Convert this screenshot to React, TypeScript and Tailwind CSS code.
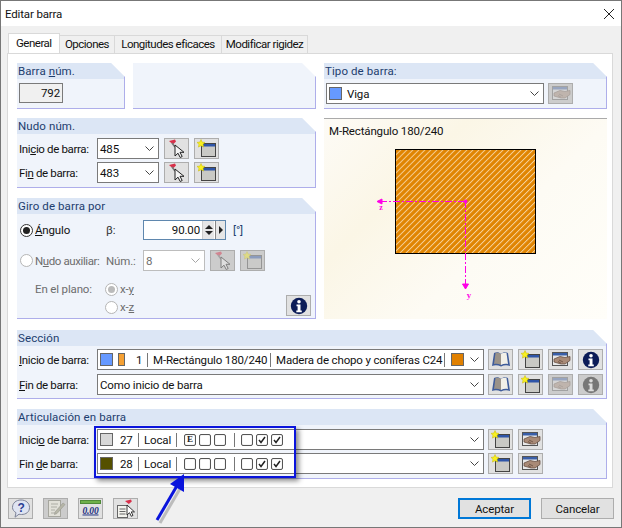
import type { ReactNode } from 'react';

const NewWinIcon = ({ off = false }: { off?: boolean }) => (
  <svg width="21" height="19" viewBox="0 0 21 19" className={off ? 'opacity-40' : ''}>
    <rect x="5.500" y="4.500" width="14" height="13" fill="#c9c9c5" stroke="#444" />
    <rect x="6" y="5" width="13" height="2.500" fill="#2f55a8" />
    <path d="M5 0.500l1.200 2.600 2.800 .3-2 1.900 .6 2.800-2.600-1.400-2.600 1.400 .6-2.800-2-1.900 2.800-.3z" fill="#f8f020" stroke="#c8b800" strokeWidth="0.5" />
  </svg>
);

const PinIcon = ({ off = false }: { off?: boolean }) => (
  <svg width="20" height="19" viewBox="0 0 20 19" className={off ? 'opacity-45' : ''}>
    <path d="M2 2l6-1.500 1 2-3 3z" fill="#d8304a" />
    <path d="M5 4l3 4" stroke="#777" strokeWidth="1.600" />
    <path d="M8 6v11l3-2.800 2.200 4.300 2-1-2.200-4.200h4z" fill="#f4f4f4" stroke="#222" strokeWidth="1" />
  </svg>
);

const HandIcon = ({ off = false }: { off?: boolean }) => (
  <svg width="20" height="17" viewBox="0 0 20 17" className={off ? 'opacity-35' : ''}>
    <rect x="1.500" y="1.500" width="15" height="13" fill="#e8e8e8" stroke="#555" />
    <rect x="2" y="2" width="14" height="2.500" fill="#3a5fa8" />
    <path d="M3 8l6-2.500 5 1 5-1v4l-5 3.500h-4l-7-2z" fill="#a98a76" stroke="#5b4436" strokeWidth="0.7" />
    <path d="M8 9l4 2M7 10.500l3 1.700" stroke="#5b4436" strokeWidth="0.7" />
  </svg>
);

const BookIcon = () => (
  <svg width="20" height="17" viewBox="0 0 20 17">
    <path d="M1 15l2-13c2.500-1 5-1 7 1 2-2 4.500-2 7-1l2 13c-3-1.200-6-1-9 .5-3-1.500-6-1.700-9-.5z" fill="#3f5c9a" />
    <path d="M3 13l1.500-11c2-.5 4-.2 5.500 1v11c-2-1.200-4.500-1.500-7-1z" fill="#9a9288" />
    <path d="M17 13l-1.500-11c-2-.5-4-.2-5.500 1v11c2-1.200 4.500-1.500 7-1z" fill="#f2f0e8" />
  </svg>
);

const InfoIcon = ({ off = false }: { off?: boolean }) => (
  <svg width="18" height="18" viewBox="0 0 18 18">
    <circle cx="9" cy="9" r="8.200" fill={off ? '#777' : '#0c1c58'} />
    <circle cx="9" cy="4.700" r="1.800" fill={off ? '#ddd' : '#fff'} />
    <path d="M6.500 7.500h4v6h1.300v1.800h-5.500v-1.800h1.300v-4.200h-1.100z" fill={off ? '#ddd' : '#fff'} />
  </svg>
);

const HelpIcon = () => (
  <svg width="20" height="19" viewBox="0 0 20 19">
    <path d="M10 1c5 0 8.500 3 8.500 7.500s-3.500 7-8 7c-1 0-1.500 0-2.500-.3l-4 3 1-4.500c-2-1.200-3.500-3-3.500-5.200 0-4.500 3.500-7.500 8.500-7.500z" fill="#dfe4f2" stroke="#7d8398" />
    <text x="10" y="13" textAnchor="middle" fontSize="12" fontWeight="700" fontFamily="Liberation Sans, sans-serif" fill="#2a3f94">?</text>
  </svg>
);

const NoteIcon = () => (
  <svg width="20" height="19" viewBox="0 0 20 19" className="opacity-60">
    <rect x="2.500" y="1.500" width="12" height="16" fill="#f1efe2" stroke="#8d8d80" />
    <path d="M5 5h7M5 8h6M5 11h4M5 14h4" stroke="#9a9a8c" />
    <path d="M9 13l8-9 2 1.500-8 9-2.500 1z" fill="#a8a890" stroke="#77776a" strokeWidth="0.6" />
  </svg>
);

const ZeroIcon = () => (
  <svg width="21" height="17" viewBox="0 0 21 17">
    <rect x="0.500" y="0.500" width="20" height="3" fill="#6fb04a" stroke="#4f8a38" />
    <text x="10.500" y="13.500" textAnchor="middle" fontSize="9.500" fontStyle="italic" fontWeight="700" fontFamily="Liberation Serif, serif" fill="#1d2f80" textDecoration="underline">0.00</text>
  </svg>
);

const ListPinIcon = () => (
  <svg width="20" height="20" viewBox="0 0 20 20">
    <rect x="1.500" y="6.500" width="10" height="12" fill="#f4f4ee" stroke="#666" />
    <path d="M3.500 10h6M3.500 12.500h6M3.500 15h6" stroke="#666" />
    <path d="M9 2l6-1.500 .8 2-3 2.500z" fill="#d8304a" />
    <path d="M11 6v10l2.500-2.300 1.800 3.600 1.700-.9-1.800-3.500h3.300z" fill="#fff" stroke="#222" strokeWidth="0.9" />
  </svg>
);

const Chevron = ({ off = false }: { off?: boolean }) => (
  <svg width="9" height="5" viewBox="0 0 9 5" className="shrink-0">
    <path d="M0.500 0.500l4 4 4-4" fill="none" stroke={off ? '#a6a6a6' : '#444'} />
  </svg>
);

const IconBtn = ({ children, off = false }: { children: ReactNode; off?: boolean }) => (
  <div className={`w-[25px] h-[21px] border border-[#adadad] flex items-center justify-center shrink-0 overflow-hidden ${off ? 'bg-[#cccccc]' : 'bg-[#e1e1e1]'}`}>
    {children}
  </div>
);

const Group = ({ title, className = '', children }: { title?: ReactNode; className?: string; children?: ReactNode }) => (
  <div className={`bg-[#f0f4fb] border-b border-r border-[#aeaeea] flex flex-col [clip-path:polygon(0_0,calc(100%-14px)_0,100%_14px,100%_100%,0_100%)] ${className}`}>
    {title !== undefined && (
      <div className="h-[16px] shrink-0 bg-[#dce6f5] pl-[1px] leading-[16px] text-[#1d3d6e] tracking-[0.1px]">{title}</div>
    )}
    {children}
  </div>
);

const Combo = ({ className = '', off = false, children }: { className?: string; off?: boolean; children: ReactNode }) => (
  <div className={`h-[21px] bg-white border flex items-center shrink-0 pr-[4px] ${off ? 'border-[#bdbdbd] text-[#6d6d6d]' : 'border-[#7a7a7a] text-[#111]'} ${className}`}>
    <div className="flex-1 min-w-0 flex items-center whitespace-nowrap">{children}</div>
    <Chevron off={off} />
  </div>
);

const Sep = ({ className = '' }: { className?: string }) => <div className={`w-px h-[14px] bg-[#777] shrink-0 ${className}`} />;

const Swatch = ({ className }: { className: string }) => <div className={`w-[13px] h-[13px] border border-[#666] shrink-0 ${className}`} />;

const Label = ({ before, mark, after }: { before?: string; mark: string; after?: string }) => (
  <div className="w-[78px] -ml-[1px] shrink-0 whitespace-nowrap tracking-[-0.35px]">
    {before}
    <span className="underline">{mark}</span>
    {after}
  </div>
);

const Tick = ({ checked = false, e = false }: { checked?: boolean; e?: boolean }) => (
  <div className="w-[12px] h-[12px] border border-[#555] rounded-[2px] bg-white flex items-center justify-center shrink-0 shadow-[inset_0_0_1px_#999]">
    {checked && (
      <svg width="8" height="8" viewBox="0 0 8 8">
        <path d="M1 4l2 2.500 4-5.500" fill="none" stroke="#222" strokeWidth="1.500" />
      </svg>
    )}
    {e && <span className="text-[9px] leading-[9px] font-bold text-[#222] [font-family:'Liberation_Serif',serif]">E</span>}
  </div>
);

const Radio = ({ checked = false, off = false }: { checked?: boolean; off?: boolean }) => (
  <div className={`w-[13px] h-[13px] rounded-full border bg-white flex items-center justify-center shrink-0 ${off ? 'border-[#b5b5b5]' : 'border-[#333]'}`}>
    {checked && <div className={`w-[7px] h-[7px] rounded-full ${off ? 'bg-[#bbbbbb]' : 'bg-[#222]'}`} />}
  </div>
);

const HingeCombo = ({ swatch, num, first }: { swatch: string; num: string; first: boolean }) => (
  <Combo className="w-[387px]">
    <Swatch className={`ml-[2px] ${swatch}`} />
    <span className="ml-[7px] w-[12px]">{num}</span>
    <Sep className="ml-[6px]" />
    <span className="ml-[5px] w-[27px]">Local</span>
    <Sep className="ml-[5px]" />
    <div className="ml-[7px] flex gap-[3px]">
      <Tick e={first} />
      <Tick />
      <Tick />
    </div>
    <Sep className="ml-[8px]" />
    <div className="ml-[6px] flex gap-[3px]">
      <Tick />
      <Tick checked />
      <Tick checked />
    </div>
  </Combo>
);

const SectionPreview = () => (
  <svg width="210" height="170" viewBox="0 0 210 170" className="ml-[15px]">
    <defs>
      <pattern id="hatch" width="4.250" height="4.250" patternUnits="userSpaceOnUse" patternTransform="rotate(45)">
        <rect width="4.250" height="4.250" fill="#e08400" />
        <rect width="1" height="4.250" fill="#f6cf96" />
      </pattern>
    </defs>
    <rect x="56.500" y="10.500" width="140" height="104" fill="url(#hatch)" stroke="#000" />
    <g stroke="#ff00e6" fill="#ff00e6">
      <path d="M126 62.500H43" strokeDasharray="7 2 2 2" fill="none" />
      <path d="M126.500 62v83" strokeDasharray="7 2 2 2" fill="none" />
      <path d="M38 62.500l5-2.500v5z" />
      <path d="M123.500 145l3 5 3-5z" />
      <circle cx="126.500" cy="62.500" r="1.500" />
    </g>
    <text x="42" y="71" fontSize="8" fontWeight="700" textAnchor="middle" fontFamily="Liberation Serif, serif" fill="#ff00e6">z</text>
    <text x="130" y="159" fontSize="9" fontWeight="700" textAnchor="middle" fontFamily="Liberation Serif, serif" fill="#ff00e6">y</text>
  </svg>
);

export default function App() {
  return (
    <div className="relative w-[622px] h-[528px] overflow-hidden border border-[#777] bg-[#f0f0f0] flex flex-col text-[11.5px] tracking-[-0.15px] leading-[16px] text-[#111] [font-family:Roboto,'Liberation_Sans',sans-serif]">
      <div className="h-[25px] shrink-0 bg-white flex items-center justify-between pl-[4px] pr-[4px]">
        <span>Editar barra</span>
        <svg width="12" height="12" viewBox="0 0 12 12" className="mr-[2px]">
          <path d="M1 1l10 10M11 1L1 11" stroke="#222" strokeWidth="1" />
        </svg>
      </div>

      <div className="h-[27px] shrink-0 pl-[7px] flex items-end relative z-10 whitespace-nowrap tracking-[-0.5px]">
        <div className="w-[52px] h-[20px] bg-white border border-b-0 border-[#d9d9d9] pl-[7px] leading-[18px]">General</div>
        <div className="w-[55px] h-[18px] border-r border-t border-[#d9d9d9] bg-[#f0f0f0] text-center">Opciones</div>
        <div className="w-[107px] h-[18px] border-r border-t border-[#d9d9d9] bg-[#f0f0f0] text-center">Longitudes eficaces</div>
        <div className="w-[86px] h-[18px] border-r border-t border-[#d9d9d9] bg-[#f0f0f0] text-center">Modificar rigidez</div>
      </div>

      <div className="ml-[6px] w-[606px] h-[435px] shrink-0 bg-white border border-[#d9d9d9] pl-[9px] pt-[9px] flex flex-col">
        <div className="flex gap-[8px] h-[46px] shrink-0">
          <Group className="w-[108px]" title={<>Barra <span className="underline">n</span>úm.</>}>
            <div className="ml-[2px] mt-[4px] w-[44px] h-[20px] bg-[#f0f0f0] border border-[#7a7a7a] text-right pr-[2px] leading-[18px]">792</div>
          </Group>
          <Group className="w-[183px]" />
          <Group className="w-[283px]" title="Tipo de barra:">
            <div className="flex gap-[4px] mt-[4px] ml-[2px]">
              <Combo className="w-[218px]">
                <Swatch className="ml-[2px] bg-[#6699ff]" />
                <span className="ml-[5px]">Viga</span>
              </Combo>
              <IconBtn off><HandIcon off /></IconBtn>
            </div>
          </Group>
        </div>

        <div className="flex gap-[8px] mt-[9px] shrink-0">
          <div className="w-[299px] flex flex-col gap-[10px]">
            <Group className="h-[70px]" title="Nudo núm.">
              <div className="flex items-center mt-[4px] ml-[3px]">
                <Label before="Ini" mark="c" after="io de barra:" />
                <Combo className="w-[62px]">
                  <span className="ml-[2px]">485</span>
                </Combo>
                <div className="ml-[5px] flex gap-[5px]">
                  <IconBtn><PinIcon /></IconBtn>
                  <IconBtn><NewWinIcon /></IconBtn>
                </div>
              </div>
              <div className="flex items-center mt-[3px] ml-[3px]">
                <Label before="Fi" mark="n" after=" de barra:" />
                <Combo className="w-[62px]">
                  <span className="ml-[2px]">483</span>
                </Combo>
                <div className="ml-[5px] flex gap-[5px]">
                  <IconBtn><PinIcon /></IconBtn>
                  <IconBtn><NewWinIcon /></IconBtn>
                </div>
              </div>
            </Group>

            <Group className="h-[121px]" title="Giro de barra por">
              <div className="flex items-center mt-[6px] ml-[3px] whitespace-nowrap">
                <Radio checked />
                <span className="ml-[2px] w-[71px]"><span className="underline">Á</span>ngulo</span>
                <span className="w-[37px] text-[#333]">β:</span>
                <div className="w-[83px] h-[20px] bg-white border border-[#5f87ae] flex items-center justify-end">
                  <span className="mr-[2px]">90.00</span>
                  <div className="w-[12px] h-full bg-[#e6e6e6] flex flex-col items-center justify-center gap-[2px] border-l border-[#ccc]">
                    <div className="w-0 h-0 border-x-[4px] border-x-transparent border-b-[4px] border-b-[#222]" />
                    <div className="w-0 h-0 border-x-[4px] border-x-transparent border-t-[4px] border-t-[#222]" />
                  </div>
                  <div className="ml-[1px] w-[10px] h-full bg-[#e6e6e6] border-l border-[#888] flex items-center justify-center">
                    <div className="w-0 h-0 border-y-[4px] border-y-transparent border-l-[4px] border-l-[#222]" />
                  </div>
                </div>
                <span className="ml-[7px] text-[#1d3d6e]">[°]</span>
              </div>
              <div className="flex items-center mt-[10px] ml-[3px] text-[#6d6d6d] whitespace-nowrap">
                <Radio off />
                <span className="ml-[2px] w-[71px] tracking-[-0.4px]">N<span className="underline">u</span>do auxiliar:</span>
                <span className="w-[37px]">Núm.:</span>
                <Combo off className="w-[62px]">
                  <span className="ml-[2px]">8</span>
                </Combo>
                <div className="ml-[5px] flex gap-[5px]">
                  <IconBtn off><PinIcon off /></IconBtn>
                  <IconBtn off><NewWinIcon off /></IconBtn>
                </div>
              </div>
              <div className="flex mt-[10px] text-[#6d6d6d] whitespace-nowrap">
                <span className="ml-[18px] w-[70px]">En el plano:</span>
                <div className="flex flex-col gap-[2px] w-[32px]">
                  <div className="flex items-center gap-[2px]">
                    <Radio checked off />
                    <span>x-<span className="underline">y</span></span>
                  </div>
                  <div className="flex items-center gap-[2px]">
                    <Radio off />
                    <span>x-<span className="underline">z</span></span>
                  </div>
                </div>
                <div className="ml-[149px] mt-[14px]">
                  <IconBtn><InfoIcon /></IconBtn>
                </div>
              </div>
            </Group>
          </div>

          <div className="w-[283px] h-[201px] border-t border-[#aaa] bg-[linear-gradient(135deg,#fdfbf6_0%,#fbf6e6_30%,#fdfbf4_60%,#fffef9_100%)]">
            <div className="pl-[5px] pt-[4px]">M-Rectángulo 180/240</div>
            <SectionPreview />
          </div>
        </div>

        <Group className="w-[590px] h-[69px] mt-[11px] shrink-0" title="Sección">
          <div className="flex items-center mt-[3px] ml-[3px]">
            <Label mark="I" after="nicio de barra:" />
            <Combo className="w-[387px]">
              <Swatch className="ml-[2px] bg-[#6699ff]" />
              <div className="ml-[5px] w-[7px] h-[13px] bg-[#f5a033] border border-[#666] shrink-0" />
              <span className="ml-[11px] w-[10px]">1</span>
              <Sep className="ml-[1px]" />
              <span className="ml-[5px] w-[112px]">M-Rectángulo 180/240</span>
              <Sep className="ml-[5px]" />
              <span className="ml-[5px] w-[162px]">Madera de chopo y coníferas C24</span>
              <Sep className="ml-[6px]" />
              <Swatch className="ml-[6px] bg-[#e08000]" />
            </Combo>
            <div className="ml-[4px] flex gap-[5px]">
              <IconBtn><BookIcon /></IconBtn>
              <IconBtn><NewWinIcon /></IconBtn>
              <IconBtn><HandIcon /></IconBtn>
              <IconBtn><InfoIcon /></IconBtn>
            </div>
          </div>
          <div className="flex items-center mt-[4px] ml-[3px]">
            <Label mark="F" after="in de barra:" />
            <Combo className="w-[387px]">
              <span className="ml-[2px]">Como inicio de barra</span>
            </Combo>
            <div className="ml-[4px] flex gap-[5px]">
              <IconBtn><BookIcon /></IconBtn>
              <IconBtn><NewWinIcon /></IconBtn>
              <IconBtn off><HandIcon off /></IconBtn>
              <IconBtn off><InfoIcon off /></IconBtn>
            </div>
          </div>
        </Group>

        <Group className="w-[590px] h-[70px] mt-[10px] shrink-0" title="Articulación en barra">
          <div className="flex items-center mt-[4px] ml-[3px]">
            <Label before="Inici" mark="o" after=" de barra:" />
            <HingeCombo swatch="bg-[#d8d8d8]" num="27" first />
            <div className="ml-[4px] flex gap-[5px]">
              <IconBtn><NewWinIcon /></IconBtn>
              <IconBtn><HandIcon /></IconBtn>
            </div>
          </div>
          <div className="flex items-center mt-[3px] ml-[3px]">
            <Label before="Fin " mark="d" after="e barra:" />
            <HingeCombo swatch="bg-[#555000]" num="28" first={false} />
            <div className="ml-[4px] flex gap-[5px]">
              <IconBtn><NewWinIcon /></IconBtn>
              <IconBtn><HandIcon /></IconBtn>
            </div>
          </div>
        </Group>
      </div>

      <div className="flex-1 flex items-start pt-[10px] pl-[7px] pr-[7px]">
        <div className="flex gap-[10px]">
          <IconBtn><HelpIcon /></IconBtn>
          <IconBtn off><NoteIcon /></IconBtn>
          <IconBtn><ZeroIcon /></IconBtn>
          <IconBtn><ListPinIcon /></IconBtn>
        </div>
        <div className="ml-auto flex gap-[10px]">
          <div className="w-[73px] h-[21px] border-2 border-[#0078d7] bg-[#e1e1e1] flex items-center justify-center">Aceptar</div>
          <div className="w-[73px] h-[21px] border border-[#adadad] bg-[#e1e1e1] flex items-center justify-center">Cancelar</div>
        </div>
      </div>

      {/* callout drawn over the hinge row */}
      <div className="absolute left-[93px] top-[425px] w-[202px] h-[52px] border-2 border-[#0a14dc] shadow-[3px_3px_5px_rgba(0,0,0,0.45)]" />
      <svg width="50" height="56" viewBox="0 0 50 56" className="absolute left-[145px] top-[469px]">
        <path d="M11 50L32 14" stroke="#8a8a8a" strokeWidth="3" opacity="0.5" transform="translate(3 3)" />
        <path d="M11 50L32 14" stroke="#0a14dc" strokeWidth="3" />
        <path d="M38 4L24 14l14 8z" fill="#0a14dc" />
      </svg>
    </div>
  );
}
